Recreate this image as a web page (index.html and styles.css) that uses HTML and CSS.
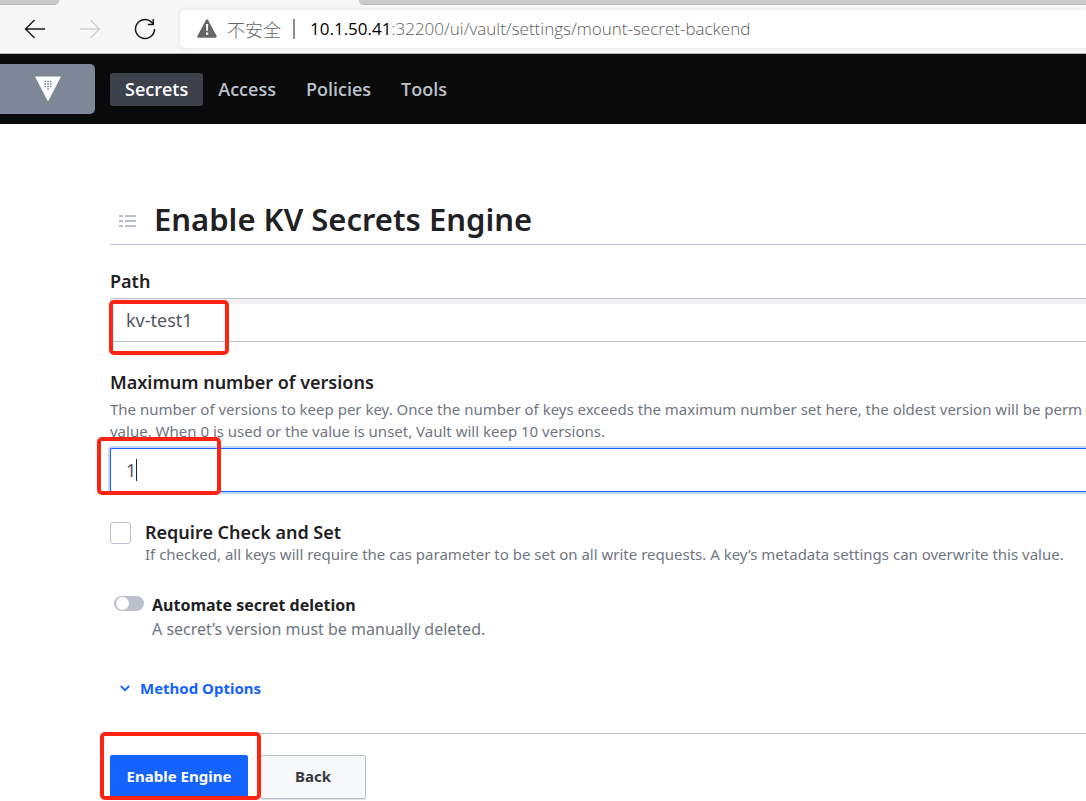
FILE: index.html
```html
<!DOCTYPE html>
<html lang="en">
<head>
<meta charset="utf-8">
<title>Enable KV Secrets Engine</title>
<link rel="stylesheet" href="styles.css">
</head>
<body>
<header class="browser">
  <div class="tabs"><span class="tab tab-left"></span><span class="tab-active"></span><span class="tab tab-right"></span></div>
  <div class="toolbar">
    <button class="tool" type="button" aria-label="Back in history">
      <svg width="22" height="20" viewBox="0 0 22 20" fill="none" stroke="#1b1b1b" stroke-width="1.4"><path d="M21 10H1.500M10.500 1L1.500 10l9 9"/></svg>
    </button>
    <button class="tool" type="button" aria-label="Forward" disabled>
      <svg width="22" height="20" viewBox="0 0 22 20" fill="none" stroke="#d0d0d0" stroke-width="1.4"><path d="M1 10h19.500M11.500 1l9 9-9 9"/></svg>
    </button>
    <button class="tool" type="button" aria-label="Reload">
      <svg width="22" height="22" viewBox="0 0 22 22" fill="none" stroke="#1b1b1b" stroke-width="1.5"><path d="M20.500 11A9.500 9.500 0 1 1 17.500 4.100L19.300 5.800M19.300 1v5.500h-5.500"/></svg>
    </button>
    <div class="address">
      <svg width="20" height="19" viewBox="0 0 20 19"><path d="M10 1.500L18.500 17.500H1.500z" fill="#666" stroke="#666" stroke-width="2.500" stroke-linejoin="round"/><path d="M9 5h2.200l-.4 7H9.400zM9 13.500h2.200v2.200H9z" fill="#fff"/></svg>
      <span class="warning" lang="zh">不安全</span>
      <span class="divider"></span>
      <span class="url"><b>10.1.50.41</b>:32200/ui/vault/settings/mount-secret-backend</span>
    </div>
  </div>
</header>
<nav class="nav">
  <a class="brand" href="#" aria-label="Vault">
    <svg width="26" height="26" viewBox="0 0 26 26"><path d="M0 .5h26L13 25.500z" fill="#fff"/><path d="M9.500 5.500h7M9.500 8h7M9.500 10.500h7M12.200 13h1.800" stroke="#7d8797" stroke-width="1.500" stroke-dasharray="1.700 1"/></svg>
  </a>
  <a class="nav-link current" href="#">Secrets</a>
  <a class="nav-link" href="#">Access</a>
  <a class="nav-link" href="#">Policies</a>
  <a class="nav-link" href="#">Tools</a>
</nav>
<main class="page">
  <div class="title">
    <svg width="18" height="14" viewBox="0 0 18 14" stroke="#bac1cc" stroke-width="2"><path d="M1 2h4M7 2h11M1 7h4M7 7h11M1 12h4M7 12h11"/></svg>
    <h1>Enable KV Secrets Engine</h1>
  </div>
  <form>
    <label class="label" for="path">Path</label>
    <div class="control">
      <input class="input" id="path" type="text" value="kv-test1">
      <span class="mark mark-path"></span>
    </div>
    <label class="label label-versions" for="versions">Maximum number of versions</label>
    <p class="help">The number of versions to keep per key. Once the number of keys exceeds the maximum number set here, the oldest version will be perm<br>value. When 0 is used or the value is unset, Vault will keep 10 versions.</p>
    <div class="control">
      <input class="input focused" id="versions" type="text" inputmode="numeric" value="1">
      <span class="caret"></span>
      <span class="mark mark-versions"></span>
    </div>
    <div class="option option-check">
      <input class="checkbox" id="cas" type="checkbox">
      <div>
        <label class="label" for="cas">Require Check and Set</label>
        <p class="help">If checked, all keys will require the cas parameter to be set on all write requests. A key’s metadata settings can overwrite this value.</p>
      </div>
    </div>
    <div class="option option-toggle">
      <input class="toggle" id="deletion" type="checkbox" role="switch">
      <div>
        <label class="label label-toggle" for="deletion">Automate secret deletion</label>
        <p class="help help-toggle">A secret’s version must be manually deleted.</p>
      </div>
    </div>
    <button class="method" type="button">
      <svg width="10" height="7" viewBox="0 0 10 7" fill="none" stroke="#1563ff" stroke-width="1.800"><path d="M.8 1L5 5.200 9.200 1"/></svg>
      Method Options
    </button>
    <div class="actions">
      <button class="button primary" type="button">Enable Engine</button>
      <button class="button" type="button">Back</button>
      <span class="mark mark-enable"></span>
    </div>
  </form>
</main>
</body>
</html>
```
FILE: styles.css
```css
* { box-sizing: border-box; }
body {
  margin: 0;
  overflow-x: hidden;
  background: #fff;
  color: #1f2124;
  font-family: "Noto Sans", "Open Sans", "Noto Sans CJK SC", sans-serif;
}
h1, p { margin: 0; }
button, input { font-family: inherit; margin: 0; }
a { text-decoration: none; }

.browser { background: #f7f7f7; border-bottom: 1px solid #b5b8bc; }
.tabs { display: flex; height: 5px; }
.tab { background: #cbcbcb; border-bottom: 1px solid #bbb; }
.tab-left { width: 59px; border-bottom-right-radius: 5px; }
.tab-active { width: 300px; }
.tab-right { flex: 1; border-bottom-left-radius: 5px; }
.toolbar { display: flex; align-items: center; height: 48px; padding: 0 0 1px 24px; }
.tool { display: flex; width: 55px; padding: 0; border: 0; background: none; }
.address {
  display: flex;
  flex: 1;
  align-items: center;
  height: 38px;
  margin-left: -9px;
  padding-left: 17px;
  border-radius: 5px 0 0 5px;
  background: #fff;
  box-shadow: 0 0 4px #e4e4e4;
  white-space: nowrap;
}
.warning {
  margin-left: 10px;
  color: #666;
  font: 300 18px "Noto Sans CJK SC", sans-serif;
}
.divider { width: 2px; height: 20px; margin: 0 15px 0 12px; background: #8c8c8c; }
.url { color: #5c5c5c; font-family: "Open Sans", sans-serif; font-size: 17px; font-weight: 300; }
.url b { color: #000; font-weight: 400; }

.nav { display: flex; align-items: center; height: 70px; background: #0a0a0a; }
.brand {
  display: flex;
  align-items: center;
  justify-content: center;
  width: 95px;
  height: 50px;
  margin-right: 15px;
  border-radius: 0 5px 5px 0;
  background: #7d8797;
}
.nav-link {
  padding: 0 15px;
  border-radius: 3px;
  color: #bac1cc;
  font-family: "Open Sans", sans-serif;
  font-size: 18px;
  font-weight: 600;
  line-height: 33px;
}
.current { background: #3c414b; color: #fff; }

.page { padding: 72px 0 1px 110px; }
.title {
  display: flex;
  align-items: flex-start;
  gap: 18px;
  height: 49px;
  padding-left: 8px;
  border-bottom: 1px solid #bac1cc;
}
.title svg { margin-top: 18px; }
h1 { font-size: 31px; font-weight: 600; line-height: 46px; }
.label { display: block; font-size: 18px; font-weight: 600; line-height: 24px; }
form > .label { margin-top: 24px; margin-bottom: 5px; }
form > .label-versions { margin-top: 28px; margin-bottom: 4px; }
.help { color: #6f7682; font-size: 15px; line-height: 22px; white-space: nowrap; }
.control { position: relative; }
.help + .control { margin-top: 6px; }
.input {
  display: block;
  width: 100%;
  height: 44px;
  padding: 0 15px;
  border: 1px solid #bac1cc;
  border-right: 0;
  border-radius: 2px 0 0 2px;
  outline: 0;
  background: #fff;
  box-shadow: inset 0 5px #f1f1f1;
  color: #525761;
  font-size: 18px;
}
.focused { border-color: #1563ff; box-shadow: 0 0 0 2px #c4d6ff; }
.caret { position: absolute; top: 11px; left: 26px; width: 1px; height: 22px; background: #222; }
.mark { position: absolute; border: 4px solid #ff2314; border-radius: 5px; pointer-events: none; }
.mark-path { top: 2px; left: -1px; width: 120px; height: 55px; }
.mark-versions { top: -11px; left: -13px; width: 124px; height: 58px; }
.mark-enable { top: -2px; left: -10px; width: 161px; height: 68px; }

.option { display: flex; align-items: flex-start; }
.option-check { gap: 14px; margin-top: 28px; }
.option-check .help { line-height: 20px; }
.checkbox, .toggle { flex: none; appearance: none; }
.checkbox { width: 21px; height: 22px; margin-top: 2px; border: 1px solid #bac1cc; border-radius: 3px; }
.option-toggle { gap: 8px; margin-top: 29px; padding-left: 4px; }
.toggle { width: 30px; height: 15px; margin-top: 3px; padding: 1px 2px; border-radius: 8px; background: #bac1cc; }
.toggle::before { content: ""; display: block; width: 13px; height: 13px; border-radius: 50%; background: #fff; }
.label-toggle { font-size: 16px; font-weight: 700; }
.help-toggle { font-size: 16px; line-height: 24px; }
.method {
  display: flex;
  align-items: center;
  gap: 10px;
  margin-top: 35px;
  padding: 0 0 0 10px;
  border: 0;
  background: none;
  color: #1563ff;
  font-size: 15px;
  font-weight: 700;
  line-height: 24px;
}
.actions {
  position: relative;
  display: flex;
  gap: 12px;
  margin-top: 33px;
  padding-top: 21px;
  border-top: 1px solid #bac1cc;
}
.button {
  min-width: 106px;
  height: 44px;
  padding: 0 15px 2px;
  border: 1px solid #bac1cc;
  border-radius: 2px;
  background: #f7f8fa;
  box-shadow: 0 2px 1px #e2e3e5;
  color: #373a42;
  font-size: 15px;
  font-weight: 700;
}
.primary { min-width: 138px; border-color: #1563ff; background: #1563ff; color: #fff; }
```
